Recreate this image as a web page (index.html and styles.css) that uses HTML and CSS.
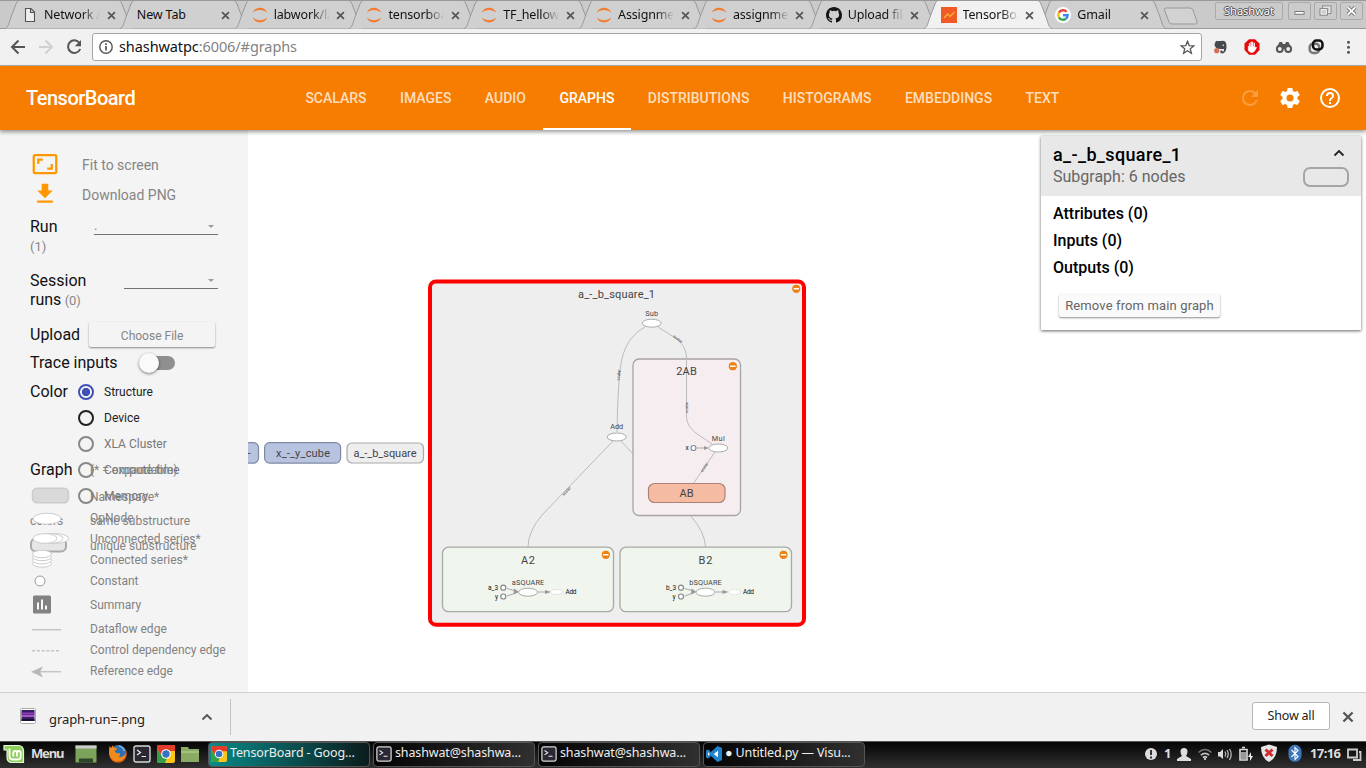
FILE: index.html
```html
<!DOCTYPE html>
<html lang="en">
<head>
<meta charset="utf-8">
<title>TensorBoard</title>
<link rel="stylesheet" href="styles.css">
</head>
<body>
<svg class="defs" width="0" height="0">
  <defs>
    <symbol id="tab" viewBox="0 0 128 29"><path d="M0 28.5C3 28 4 23 6 17L11 4C12 1.500 13 .5 15 .5H113C115 .5 116 1.500 117 4L122 17C124 23 125 28 128 28.500" /></symbol>
    <symbol id="x" viewBox="0 0 10 10"><path d="M1.200 1.200 8.800 8.800M8.800 1.200 1.200 8.800" fill="none" stroke="#555" stroke-width="1.900"/></symbol>
    <symbol id="jup" viewBox="0 0 16 16"><path d="M.8 5.500C3-1 13-1 15.200 5.500 11 2 5 2 .8 5.500ZM.8 10.500C3 17 13 17 15.200 10.500 11 14 5 14 .8 10.500Z" fill="#f37c2e"/></symbol>
    <symbol id="term" viewBox="0 0 18 18"><rect x="1" y="1" width="16" height="16" rx="2" fill="#2b2833" stroke="#d8d8d8" stroke-width="1.400"/><path d="M4 5 7.500 7.500 4 10M8.500 11.500H13" fill="none" stroke="#eee" stroke-width="1.200"/></symbol>
    <symbol id="chrome" viewBox="0 0 18 18"><rect width="18" height="18" rx="2" fill="#fbc51b"/><path d="M0 2Q0 0 2 0H16Q18 0 18 2V6H9L5 11 0 4Z" fill="#e53b2c"/><path d="M0 4 5 11 10 13 8 18H2Q0 18 0 16Z" fill="#34a14a"/><circle cx="9" cy="9" r="4.800" fill="#fff"/><circle cx="9" cy="9" r="3.700" fill="#3373c4"/></symbol>
    <symbol id="minus" viewBox="0 0 8 8"><circle cx="4" cy="4" r="3.900" fill="#ee8113"/><path d="M1.500 4H6.500" stroke="#fff" stroke-width="1.300"/></symbol>
  </defs>
</svg>

<div class="tabstrip">
  <div class="tab"><svg class="shape"><use href="#tab"/></svg><svg class="fav" viewBox="0 0 16 16"><path d="M3.500 1.500H9L12.500 5V14.500H3.500ZM8.500 1.500V5.500H12.500" fill="#eee" stroke="#555" stroke-width="1.100"/></svg><span class="tt">Network Analysis</span><svg class="tx"><use href="#x"/></svg></div>
  <div class="tab"><svg class="shape"><use href="#tab"/></svg><span class="tt wide">New Tab</span><svg class="tx"><use href="#x"/></svg></div>
  <div class="tab"><svg class="shape"><use href="#tab"/></svg><svg class="fav"><use href="#jup"/></svg><span class="tt">labwork/lab</span><svg class="tx"><use href="#x"/></svg></div>
  <div class="tab"><svg class="shape"><use href="#tab"/></svg><svg class="fav"><use href="#jup"/></svg><span class="tt">tensorboard</span><svg class="tx"><use href="#x"/></svg></div>
  <div class="tab"><svg class="shape"><use href="#tab"/></svg><svg class="fav"><use href="#jup"/></svg><span class="tt">TF_helloworld</span><svg class="tx"><use href="#x"/></svg></div>
  <div class="tab"><svg class="shape"><use href="#tab"/></svg><svg class="fav"><use href="#jup"/></svg><span class="tt">Assignment</span><svg class="tx"><use href="#x"/></svg></div>
  <div class="tab"><svg class="shape"><use href="#tab"/></svg><svg class="fav"><use href="#jup"/></svg><span class="tt">assignment</span><svg class="tx"><use href="#x"/></svg></div>
  <div class="tab"><svg class="shape"><use href="#tab"/></svg><svg class="fav" viewBox="0 0 16 16"><path fill="#151515" d="M8 0C3.580 0 0 3.580 0 8c0 3.540 2.290 6.530 5.470 7.590.4.070.55-.17.55-.38 0-.19-.01-.82-.01-1.490-2.010.37-2.530-.49-2.690-.94-.09-.23-.48-.94-.82-1.130-.28-.15-.68-.52-.01-.53.63-.01 1.080.58 1.230.82.72 1.210 1.870.87 2.330.66.070-.52.28-.87.51-1.070-1.780-.2-3.640-.89-3.640-3.950 0-.87.31-1.590.82-2.150-.08-.2-.36-1.020.08-2.120 0 0 .67-.21 2.200.82a7.600 7.600 0 0 1 4 0c1.530-1.040 2.200-.82 2.200-.82.44 1.100.16 1.920.08 2.120.51.56.82 1.270.82 2.150 0 3.070-1.870 3.750-3.650 3.950.29.25.54.73.54 1.480 0 1.070-.01 1.930-.01 2.200 0 .21.15.46.55.38A8 8 0 0 0 16 8c0-4.420-3.580-8-8-8"/></svg><span class="tt">Upload files</span><svg class="tx"><use href="#x"/></svg></div>
  <div class="tab active"><svg class="shape"><use href="#tab"/></svg><svg class="fav" viewBox="0 0 16 16"><rect width="16" height="16" fill="#f15a24"/><path d="M3 11 6.500 7 9 9.500 13.500 5" fill="none" stroke="#fbb03b" stroke-width="1.300"/></svg><span class="tt">TensorBoard</span><svg class="tx"><use href="#x"/></svg></div>
  <div class="tab"><svg class="shape"><use href="#tab"/></svg><svg class="fav" viewBox="0 0 16 16"><circle cx="8" cy="8" r="8" fill="#fff"/><g fill="none" stroke-width="2.400"><path d="M11.600 4.800A4.800 4.800 0 0 0 3.900 5.700" stroke="#ea4335"/><path d="M3.900 5.600A4.800 4.800 0 0 0 3.900 10.400" stroke="#fbbc05"/><path d="M3.900 10.300A4.800 4.800 0 0 0 11 11.700" stroke="#34a853"/><path d="M8 8.200H12.700A4.800 4.800 0 0 1 11 11.700" stroke="#4285f4"/></g></svg><span class="tt">Gmail</span><svg class="tx"><use href="#x"/></svg></div>
  <svg class="newtab" viewBox="0 0 36 18"><path d="M3 1H27Q29 1 30 3L34 15Q34.500 17 32.500 17H9Q7 17 6 15L1.500 3Q1 1 3 1Z" fill="#d2d2d2" stroke="#999"/></svg>
  <div class="winctl">
    <span class="user">Shashwat</span>
    <svg viewBox="0 0 23 17"><path d="M6 10.500H17" stroke="#777" stroke-width="4"/><path d="M7 10.500H16" stroke="#fff" stroke-width="2"/></svg>
    <svg viewBox="0 0 23 17"><g fill="#ccc"><rect x="9.500" y="4" width="7" height="6" stroke="#777" stroke-width="3"/><rect x="9.500" y="4" width="7" height="6" stroke="#fff"/><rect x="6.500" y="7" width="6" height="5" stroke="#777" stroke-width="3"/><rect x="6.500" y="7" width="6" height="5" stroke="#fff"/></g></svg>
    <svg viewBox="0 0 23 17"><path d="M7.500 4.500 15.500 12.500M15.500 4.500 7.500 12.500" stroke="#777" stroke-width="4"/><path d="M7.500 4.500 15.500 12.500M15.500 4.500 7.500 12.500" stroke="#fff" stroke-width="2"/></svg>
  </div>
</div>

<div class="toolbar">
  <svg class="nav" width="92" height="36" viewBox="0 0 92 36"><g fill="none" stroke-width="2"><path d="M25 18H12.500M18.500 11.500 12 18 18.500 24.500" stroke="#555"/><path d="M39 18H51.500M45.500 11.500 52 18 45.500 24.500" stroke="#d0d0d0"/><path d="M79.500 14A6.300 6.300 0 1 0 80.200 20" stroke="#555"/></g><path d="M81 11V17.200H74.800Z" fill="#555"/></svg>
  <div class="omni">
    <svg width="14" height="14" viewBox="0 0 14 14"><circle cx="7" cy="7" r="6.200" fill="none" stroke="#555" stroke-width="1.400"/><path d="M7 6V10.500M7 3.300V5" stroke="#555" stroke-width="1.700"/></svg>
    <span class="url">shashwatpc<i>:6006/#graphs</i></span>
    <svg class="star" width="15" height="15" viewBox="0 0 15 15"><path d="M7.500 1.300 9.200 5.600 13.800 5.900 10.300 8.800 11.400 13.300 7.500 10.800 3.600 13.300 4.700 8.800 1.200 5.900 5.800 5.600Z" fill="none" stroke="#555" stroke-width="1.300"/></svg>
  </div>
  <svg class="exts" width="160" height="36" viewBox="1206 29 160 36">
    <path d="M1214.500 44 1217.500 41H1221Q1226.500 40 1226.500 46 1226.500 53 1222.500 53.500 1219.500 53.500 1220.500 50.500H1222.500V52Q1224.500 51.500 1224 49H1220.500Q1214.500 49 1214.500 44Z" fill="#454a4e"/><path d="M1214.500 43H1217V40.500Z" fill="#454a4e"/><circle cx="1223.300" cy="45.200" r=".8" fill="#eee"/><circle cx="1216.700" cy="50.700" r="2.600" fill="#d4705a"/>
    <path d="M1249 39.300H1255L1259.500 43.500V50L1255 54.700H1249L1244.500 50V43.500Z" fill="#e8090d"/><path d="M1248.300 46V50Q1249 52.500 1252 52.500 1254.500 52.500 1256.500 47.500L1255.700 47 1254.500 48V43H1254V46.500H1253V42H1252.300V46.500H1251.500V42H1250.800V46.500H1250V43.500H1249.300V47.500Z" fill="#fff" stroke="#fff" stroke-width=".6"/>
    <path d="M1276.500 48 1279.500 42H1282L1283 44H1285L1286 42H1288.500L1291.500 48V49H1276.500Z" fill="#555"/><g fill="#f1f1f1" stroke="#555" stroke-width="2"><circle cx="1279.800" cy="49" r="2.900"/><circle cx="1288.200" cy="49" r="2.900"/></g>
    <g fill="none" stroke-width="2.500"><rect x="1309.700" y="43.700" width="9.500" height="9.300" rx="3.500" stroke="#777"/><rect x="1313" y="40.500" width="9.500" height="9" rx="3.500" stroke="#111"/></g>
    <g fill="#555"><circle cx="1348.500" cy="42.300" r="1.500"/><circle cx="1348.500" cy="47.300" r="1.500"/><circle cx="1348.500" cy="52.300" r="1.500"/></g>
  </svg>
</div>

<header class="header">
  <div class="brand">TensorBoard</div>
  <nav class="menu"><span>SCALARS</span><span>IMAGES</span><span>AUDIO</span><span class="on">GRAPHS</span><span>DISTRIBUTIONS</span><span>HISTOGRAMS</span><span>EMBEDDINGS</span><span>TEXT</span></nav>
  <div class="actions">
    <svg viewBox="0 0 24 24" class="dim"><path d="M17.650 6.350A7.960 7.960 0 0 0 12 4a8 8 0 1 0 7.730 10h-2.080A6 6 0 1 1 12 6c1.660 0 3.140.69 4.220 1.780L13 11h7V4z"/></svg>
    <svg viewBox="0 0 24 24"><path d="M19.430 12.980c.04-.32.07-.64.07-.98s-.03-.66-.07-.98l2.110-1.650c.19-.15.24-.42.12-.64l-2-3.460c-.12-.22-.39-.3-.61-.22l-2.490 1c-.52-.4-1.080-.73-1.690-.98l-.38-2.650C14.460 2.180 14.250 2 14 2h-4c-.25 0-.46.18-.49.42l-.38 2.650c-.61.25-1.170.59-1.690.98l-2.490-1c-.23-.09-.49 0-.61.22l-2 3.460c-.13.22-.07.49.12.64l2.110 1.650c-.04.32-.07.65-.07.98s.03.66.07.98l-2.110 1.650c-.19.15-.24.42-.12.64l2 3.460c.12.22.39.3.61.22l2.490-1c.52.4 1.080.73 1.690.98l.38 2.650c.03.24.24.42.49.42h4c.25 0 .46-.18.49-.42l.38-2.650c.61-.25 1.170-.59 1.690-.98l2.490 1c.23.09.49 0 .61-.22l2-3.460c.12-.22.07-.49-.12-.64zM12 15.500a3.500 3.500 0 1 1 0-7 3.500 3.500 0 0 1 0 7z"/></svg>
    <svg viewBox="0 0 24 24"><path d="M11 18h2v-2h-2zM12 2a10 10 0 1 0 0 20 10 10 0 0 0 0-20zm0 18a8 8 0 1 1 0-16 8 8 0 0 1 0 16zm0-14a4 4 0 0 0-4 4h2a2 2 0 1 1 4 0c0 2-3 1.750-3 5h2c0-2.250 3-2.500 3-5a4 4 0 0 0-4-4z"/></svg>
  </div>
</header>

<main class="main">
  <aside class="side">
    <div class="act"><svg width="30" height="30" viewBox="0 0 24 24"><path d="M19 12h-2v3h-3v2h5zM7 9h3V7H5v5h2zm14-6H3c-1.100 0-2 .9-2 2v14c0 1.100.9 2 2 2h18c1.100 0 2-.9 2-2V5c0-1.100-.9-2-2-2zm0 16H3V5h18z" transform="translate(1.200 .4) scale(.9)"/></svg><span>Fit to screen</span></div>
    <div class="act"><svg width="30" height="30" viewBox="0 0 24 24"><path d="M19 9h-4V3H9v6H5l7 7zM5 18v2h14v-2z" transform="translate(1.300 .3) scale(.89)"/></svg><span>Download PNG</span></div>
    <div class="field run"><div class="lab">Run<small>(1)</small></div><div class="select">.</div></div>
    <div class="field session"><div class="lab">Session runs <small>(0)</small></div><div class="select short"></div></div>
    <div class="row"><span>Upload</span><button class="file">Choose File</button></div>
    <div class="row"><span>Trace inputs</span><div class="switch"><b></b></div></div>
    <div class="color"><span>Color</span>
      <div class="radios"><div class="sel"><b></b>Structure</div><div class="dark"><b></b>Device</div><div><b></b>XLA Cluster</div><div><b></b>Compute time</div><div><b></b>Memory</div></div>
    </div>
    <div class="legend under">
      <div><em>colors</em>same substructure</div>
      <div><svg viewBox="0 0 50 25"><rect x="1" y="5.500" width="35" height="13" rx="5" fill="#e6e6e6" stroke="#aaa" stroke-width="2"/></svg>unique substructure</div>
    </div>
    <div class="legend">
      <div class="first"><strong>Graph</strong>(* = expandable)</div>
      <div class="h22"><svg viewBox="0 0 50 22"><rect x="2.500" y="2.300" width="36" height="14.500" rx="4.500" fill="#d9d9d9" stroke="#ccc" stroke-width="1.500"/></svg>Namespace*</div>
      <div><svg viewBox="0 0 50 21"><ellipse cx="17" cy="10.700" rx="14" ry="5.500" fill="#fff" stroke="#ccc"/></svg>OpNode</div>
      <div><svg viewBox="0 0 50 21"><g fill="#fff" stroke="#ccc"><ellipse cx="26" cy="9.500" rx="12.500" ry="4.800"/><ellipse cx="20.500" cy="9.500" rx="12.500" ry="4.800"/><ellipse cx="15" cy="9.500" rx="12" ry="4.800"/></g></svg>Unconnected series*</div>
      <div><svg viewBox="0 0 50 21"><g fill="#fff" stroke="#ccc"><ellipse cx="12" cy="13.500" rx="9.500" ry="3.700"/><ellipse cx="12" cy="10.200" rx="9.500" ry="3.700"/><ellipse cx="12" cy="7" rx="9.500" ry="3.700"/><ellipse cx="12" cy="4" rx="9.500" ry="3.700"/></g></svg>Connected series*</div>
      <div><svg viewBox="0 0 50 21"><circle cx="10" cy="10" r="5" fill="#fff" stroke="#999"/></svg>Constant</div>
      <div class="h27"><svg viewBox="0 0 50 27"><rect x="3" y="3.500" width="18" height="18" rx="1.500" fill="#828282"/><path d="M8 10.500V17.500M12 7.500V17.500M16 13.500V17.500" stroke="#fff" stroke-width="1.900"/></svg>Summary</div>
      <div><svg viewBox="0 0 50 21"><path d="M2 10.700H31" stroke="#c4c4c4" stroke-width="1.500"/></svg>Dataflow edge</div>
      <div><svg viewBox="0 0 50 21"><path d="M2 10.700H30" stroke="#c4c4c4" stroke-width="1.500" stroke-dasharray="3 1.800"/></svg>Control dependency edge</div>
      <div><svg viewBox="0 0 50 21"><path d="M10 10.700H31" stroke="#c4c4c4" stroke-width="1.500"/><path d="M1 10.700 13 5.500 10 10.700 13 16.500Z" fill="#b8b8b8"/></svg>Reference edge</div>
    </div>
  </aside>

  <svg class="graph" viewBox="248 130 1118 562">
    <g stroke="#7f89a3" stroke-width="1.200"><rect x="200" y="442.600" width="58.500" height="20.500" rx="5" fill="#b8c3e0"/><rect x="264.600" y="442.600" width="76" height="20.500" rx="5" fill="#b8c3e0"/><rect x="347" y="443" width="76.500" height="20" rx="5" fill="#eee" stroke="#a9a9a9"/></g>
    <g class="t11"><text x="249" y="457" text-anchor="middle">-</text><text x="303" y="457" textLength="54">x_-_y_cube</text><text x="385" y="457" textLength="63">a_-_b_square</text></g>
    <rect x="430" y="281.500" width="374" height="343.200" rx="6" fill="#eee" stroke="#f00" stroke-width="4"/>
    <g class="edge">
      <path d="M645 327C622 340 620 362 618.500 390 617.500 405 617.300 420 617 432"/>
      <path d="M613 441 543 514Q528 531 528 547M621 441 690 515Q705 532 705.500 547"/>
    </g>
    <rect x="633" y="359" width="107.500" height="156.500" rx="6" fill="#f6edf1" stroke="#a9a3a6" stroke-width="1.300"/>
    <g fill="#f0f5ee" stroke="#a6aba4" stroke-width="1.300"><rect x="442.500" y="547.200" width="171" height="64.500" rx="6"/><rect x="620" y="547.200" width="171.500" height="64.500" rx="6"/></g>
    <g class="edge">
      <path d="M658 327 677 339Q686.500 347 686.500 358V415C686.500 429 696 433 712 444M715 452 693 484"/>
      <path d="M697 448H707M507 588.500 516 591M507 596 516 593M538 592H547M684.500 588.500 693.500 591M684.500 596 693.500 593M715.500 592H724.500" stroke="#aaa"/>
    </g>
    <path d="M704 446 709 448 704 450ZM514 588.500 519 592 513.500 594.500ZM545 590 551 592 545 594ZM691.500 588.500 696.500 592 691 594.500ZM722.500 590 728.500 592 722.500 594Z" fill="#999"/>
    <rect x="648.500" y="483.500" width="76.500" height="19" rx="6" fill="#f5bca3" stroke="#ab8273" stroke-width="1.200"/>
    <g fill="#fff" stroke="#aaa"><ellipse cx="651.700" cy="323.200" rx="9.500" ry="4"/><ellipse cx="616.700" cy="437" rx="9.500" ry="4"/><ellipse cx="718.300" cy="448" rx="9.500" ry="4"/><ellipse cx="528" cy="592.200" rx="9.500" ry="4"/><ellipse cx="705.500" cy="592.200" rx="9.500" ry="4"/><g stroke-width=".7" stroke="#bbb" stroke-dasharray="1 1"><ellipse cx="556.700" cy="592" rx="6" ry="2.500"/><ellipse cx="734.400" cy="592" rx="6" ry="2.500"/></g></g>
    <g fill="#fff" stroke="#888" stroke-width="1.200"><circle cx="693.500" cy="448" r="2.500"/><circle cx="503.300" cy="587.700" r="2.500"/><circle cx="503.300" cy="596.500" r="2.500"/><circle cx="681" cy="587.700" r="2.500"/><circle cx="681" cy="596.500" r="2.500"/></g>
    <g class="t11"><text x="616.500" y="298" textLength="77">a_-_b_square_1</text><text x="686.500" y="374.500" textLength="20.500">2AB</text><text x="686.500" y="496.500" textLength="14">AB</text><text x="528" y="564" textLength="14">A2</text><text x="705.500" y="564" textLength="14">B2</text></g>
    <g class="t7"><text x="651.700" y="316" textLength="13">Sub</text><text x="616.700" y="428.600" textLength="13">Add</text><text x="718.300" y="441" textLength="13">Mul</text><text x="528" y="584.700" textLength="32.500">aSQUARE</text><text x="705.500" y="584.700" textLength="32.500">bSQUARE</text></g>
    <g class="t6"><text x="687" y="450.300">x</text><text x="493" y="590">a_3</text><text x="496.500" y="598.700">y</text><text x="671" y="590">b_3</text><text x="674" y="598.700">y</text><text x="571" y="594.300" textLength="11">Add</text><text x="748.500" y="594.300" textLength="11">Add</text></g>
    <g class="t4"><text transform="translate(620 375) rotate(-86)">scalar</text><text transform="translate(677 340) rotate(38)">scalar</text><text transform="translate(688 407.500) rotate(-90)">scalar</text><text transform="translate(705.500 468) rotate(-55)">scalar</text><text transform="translate(567.500 492) rotate(-46)">scalar</text></g>
    <use href="#minus" x="792" y="284.500" width="8.600" height="8.600"/><use href="#minus" x="728.500" y="362" width="8.600" height="8.600"/><use href="#minus" x="601.500" y="550.400" width="8.600" height="8.600"/><use href="#minus" x="779.200" y="550.400" width="8.600" height="8.600"/>
  </svg>

  <section class="info">
    <div class="ihead"><div><h1>a_-_b_square_1</h1><p>Subgraph: 6 nodes</p></div>
      <div class="iright"><svg width="12" height="8" viewBox="0 0 12 8"><path d="M1.500 6.500 6 2 10.500 6.500" fill="none" stroke="#222" stroke-width="1.800"/></svg><b></b></div></div>
    <div class="ibody"><h2>Attributes (0)</h2><h2>Inputs (0)</h2><h2>Outputs (0)</h2><button>Remove from main graph</button></div>
  </section>
</main>

<div class="shelf">
  <svg class="thumb" width="16" height="16" viewBox="0 0 16 16"><rect x=".5" y=".5" width="15" height="15" rx="1" fill="#fff" stroke="#aaa"/><rect x="1.500" y="2" width="13" height="11" fill="#3a1c66"/><path d="M1.500 5.500H14.500" stroke="#8a3fb5" stroke-width="2"/><path d="M2 8H14" stroke="#b45fd0" stroke-width="1.800"/><path d="M1.500 12H14.500" stroke="#1d1038" stroke-width="2"/></svg>
  <span class="fname">graph-run=.png</span>
  <svg class="chev" width="12" height="8" viewBox="0 0 12 8"><path d="M1.500 6.500 6 2 10.500 6.500" fill="none" stroke="#555" stroke-width="1.900"/></svg>
  <div class="sep"></div>
  <button class="showall">Show all</button>
  <svg class="sx" width="12" height="12"><use href="#x"/></svg>
</div>

<div class="taskbar">
  <svg class="quick" width="208" height="27" viewBox="0 741 208 27">
    <path d="M4 745.500H18Q23.500 745.500 23.500 751V762.500H12Q7 762.500 7 757V750H4Z" fill="#8fcf5c" stroke="#e8f5df" stroke-width="1.200"/><path d="M9.500 748.500V756Q9.500 759.500 12.500 759.500H18Q20.700 759.500 20.700 756.500V753Q20.700 751 18.800 751 17 751 17 753V756.500M17 753Q17 751 15.200 751 13.300 751 13.300 753V756.500" fill="none" stroke="#fff" stroke-width="1.800"/>
    <text x="31" y="758.300" textLength="33.500" class="mtext">Menu</text>
    <rect x="75.500" y="745.500" width="21" height="17" fill="#7da35a"/><rect x="75.500" y="745.500" width="21" height="3" fill="#ccc"/><rect x="79" y="758.500" width="14" height="4" fill="#30442c"/>
    <circle cx="118" cy="754" r="8.800" fill="#d9560f"/><circle cx="118.500" cy="752" r="7" fill="#2c6fb5"/><path d="M109.500 746Q107 761 118 761.500 125 761 126 753 123 758 118.500 757 121 755 119.500 753 116 754 114.500 751 117 750 117 748 113 748.500 112.500 745L111.500 748Z" fill="#f08a1c"/><path d="M119 746Q123 747 124.500 751" fill="none" stroke="#7fb6e3" stroke-width="1.500"/>
    <use href="#term" x="133" y="745" width="18" height="18"/><use href="#chrome" x="157" y="745" width="18" height="18"/>
    <path d="M181 747H188L189 749H199V762H181Z" fill="#8aab63"/><path d="M181 752H199" stroke="#bdd79e"/>
  </svg>
  <div class="task cur"><svg><use href="#chrome"/></svg><span>TensorBoard - Goog...</span></div>
  <div class="task"><svg><use href="#term"/></svg><span>shashwat@shashwa...</span></div>
  <div class="task"><svg><use href="#term"/></svg><span>shashwat@shashwa...</span></div>
  <div class="task"><svg viewBox="0 0 16 16"><path d="M11.500 0 16 2V14L11.500 16 5 10 2 12.500 0 11.500V4.500L2 3.500 5 6ZM12 4.500 7.500 8 12 11.500ZM2 6V10L4 8Z" fill="#1f84cf" fill-rule="evenodd"/><path d="M12 4.500 7.500 8 12 11.500ZM2 6V10L4 8Z" fill="#fff"/></svg><span>● Untitled.py — Visu...</span></div>
  <svg class="tray" width="230" height="27" viewBox="1136 741 230 27">
    <circle cx="1151" cy="754" r="6" fill="#ddd"/><path d="M1151 750V755M1151 756.500V758.500" stroke="#222" stroke-width="1.800"/>
    <text x="1164" y="758" textLength="6.500" class="mtext">1</text>
    <path d="M1184 748Q1187.500 748 1187.500 751.500 1187.500 754 1186 756L1191 759V761H1177V759L1182 756Q1180.500 754 1180.500 751.500 1180.500 748 1184 748Z" fill="#ddd"/>
    <g fill="none" stroke-width="1.600"><path d="M1198.500 752.500Q1205 746.500 1211.500 752.500" stroke="#777"/><path d="M1200.800 755.200Q1205 751.500 1209.200 755.200" stroke="#bbb"/><path d="M1203 757.500Q1205 756 1207 757.500" stroke="#ddd"/></g><circle cx="1205" cy="759" r="1" fill="#eee"/>
    <path d="M1218 752H1220L1223 749V759L1220 756.500H1218Z" fill="#ddd"/><g fill="none" stroke="#bbb" stroke-width="1.300"><path d="M1225 751.500Q1226.500 754 1225 756.500M1227 750Q1229.500 754 1227 758M1229.500 749Q1233 754 1229.500 760"/></g>
    <path d="M1240 749.500H1247V760H1240ZM1242 747.500H1245" fill="none" stroke="#ddd" stroke-width="1.600"/><path d="M1241 752H1246V759H1241Z" fill="#999"/><path d="M1251 752 1248 757H1250V761L1253 756H1251Z" fill="#eee"/>
    <path d="M1261 747 1269 744.500 1277 747Q1277 758 1269 762 1261 758 1261 747Z" fill="#e6e6e6"/><path d="M1265.500 749.500 1272.500 756M1272.500 749.500 1265.500 756" stroke="#d12a2f" stroke-width="3"/>
    <rect x="1288.500" y="744.800" width="13" height="17" rx="6.300" fill="#3c76bb"/><path d="M1291.500 750 1298 756.500 1295 759.500V747.500L1298 750.500 1291.500 757" fill="none" stroke="#fff" stroke-width="1.100"/>
    <text x="1310" y="758" textLength="31" class="mtext">17:16</text>
    <path d="M1348 749.500H1357V757.500H1348ZM1359 752H1360.500V760H1353" fill="none" stroke="#ccc" stroke-width="1.800"/>
  </svg>
</div>
</body>
</html>
```

FILE: styles.css
```css
* { box-sizing: border-box; }
body { margin: 0; width: 1366px; height: 768px; overflow: hidden; display: flex; flex-direction: column; font-family: Roboto, sans-serif; background: #fff; }
.defs { position: absolute; }
svg { flex: none; }
button { font-family: inherit; margin: 0; padding: 0; }

/* Browser tabs */
.tabstrip { height: 29px; flex: none; display: flex; background: #cacaca; border-top: 1px solid #999; border-bottom: 1px solid #999; padding-left: 5px; font: 13px "Noto Sans", sans-serif; color: #111; }
.tab { position: relative; width: 128px; margin-right: -13.200px; height: 28px; margin-top: -1px; display: flex; align-items: center; padding-left: 17px; flex: none; }
.tab .shape { position: absolute; left: 0; top: 0; width: 128px; height: 29px; fill: #d0d0d0; stroke: #999; }
.tab .fav { position: relative; width: 16px; height: 16px; margin-right: 6px; margin-top: 2px; }
.tab .tt { position: relative; width: 56px; overflow: hidden; white-space: nowrap; font-size: 12.500px; letter-spacing: -.15px; line-height: 20px; margin-top: 1px; -webkit-mask-image: linear-gradient(90deg, #000 68%, transparent 100%); mask-image: linear-gradient(90deg, #000 68%, transparent 100%); }
.tab .tt.wide { width: 78px; -webkit-mask-image: none; mask-image: none; }
.tab .tx { position: relative; width: 9px; height: 9px; margin-left: 6.500px; margin-top: 2px; }
.tab.active { z-index: 2; }
.tab.active .shape { fill: #f1f1f1; }
.newtab { width: 36px; height: 18px; margin: 6px 0 0 10px; }
.winctl { display: flex; margin: 1px 3px 0 auto; height: 18px; gap: 3px; }
.winctl .user { width: 68px; margin-right: 2px; line-height: 16px; font-size: 11px; text-align: center; color: #fff; text-shadow: 1px 0 #555, -1px 0 #555, 0 1px #555, 0 -1px #555; }
.winctl > * { border: 1px solid #aaa; border-radius: 2px; background: #cbcbcb; height: 18px; }
.winctl svg { width: 23px; }

.toolbar { height: 37px; flex: none; display: flex; align-items: center; background: #f1f1f1; border-bottom: 1px solid #b0b0b0; }
.omni { width: 1110px; height: 28px; background: #fff; border: 1px solid #a5a5a5; border-radius: 3px; display: flex; align-items: center; padding: 0 6px; }
.url { font: 14.500px "Noto Sans", sans-serif; letter-spacing: -.09px; margin: -2px 0 0 6px; color: #111; }
.url i { font-style: normal; color: #828282; }
.star { margin-left: auto; }
.exts { margin-left: 4px; }

/* App header */
.header { height: 64px; flex: none; background: #f77d00; display: flex; align-items: center; color: #fff; box-shadow: 0 2px 4px rgba(0,0,0,.4); z-index: 2; padding: 0 24px 0 26px; }
.brand { font-size: 20px; font-weight: 500; letter-spacing: -.5px; width: 262.700px; }
.menu { display: flex; height: 64px; font-size: 14px; font-weight: 500; letter-spacing: .01px; }
.menu span { padding: 0 16.700px; line-height: 64px; color: rgba(255,255,255,.76); }
.menu .on { color: #fff; border-bottom: 2px solid #fff; }
.actions { display: flex; gap: 16px; margin-left: auto; }
.actions svg { width: 24px; height: 24px; fill: #fff; }
.actions .dim { opacity: .25; }

.main { flex: 1; min-height: 0; display: flex; position: relative; }
.side { width: 248px; background: #f4f4f4; padding: 20px 0 0 30px; position: relative; font-size: 16px; color: #111; }
.act { height: 30px; display: flex; align-items: center; gap: 22px; font-size: 14px; color: #858585; }
.act svg { fill: #ff9800; }
.field { display: flex; justify-content: space-between; padding-right: 30px; }
.field small { font-size: 13px; color: #888; }
.run { padding-top: 7px; height: 61px; }
.run small { display: block; }
.lab { line-height: 20px; }
.session { height: 49px; }
.session .lab { width: 75px; line-height: 19px; }
.session small { letter-spacing: -.2px; margin-left: -.5px; }
.select { width: 124px; height: 18px; border-bottom: 1px solid #737373; font-size: 13px; line-height: 18px; color: #888; position: relative; }
.select::after { content: ""; position: absolute; right: 4px; top: 8px; border: 3.500px solid transparent; border-top-color: #999; border-bottom: 0; }
.select.short { width: 94px; }
.row { height: 28px; display: flex; align-items: center; }
.file { width: 126px; height: 25px; margin-left: 9px; border: 0; border-radius: 2px; background: #f4f4f4; color: #858585; font-size: 12px; padding-top: 3px; box-shadow: 0 1px 2px rgba(0,0,0,.45); }
.switch { width: 33px; height: 14px; border-radius: 7px; background: #8f8f8f; margin: 1px 0 0 24px; }
.switch b { display: block; width: 20px; height: 20px; border-radius: 50%; background: #fafafa; margin: -3px 0 0 -3px; box-shadow: 0 1px 3px rgba(0,0,0,.5); }
.color { display: flex; line-height: 26px; padding-top: 3px; }
.color > span { width: 48px; }
.radios div { height: 26px; display: flex; align-items: center; gap: 10px; font-size: 12px; color: #777; }
.radios b { width: 16px; height: 16px; border-radius: 50%; border: 2px solid #888; }
.radios .sel, .radios .dark { color: #222; }
.radios .dark b { border-color: #222; }
.radios .sel b { border-color: #3f51b5; background: radial-gradient(#3f51b5 0 3.800px, transparent 4.500px); }
/* The two legends share the lower part of the column */
.legend { position: absolute; left: 30px; top: 323.500px; width: 215px; font-size: 12px; color: #828282; }
.legend.under { top: 378px; }
.legend > div { height: 21px; display: flex; align-items: center; white-space: nowrap; }
.legend.under > div { height: 25px; }
.legend .first { height: 32px; }
.legend .h22 { height: 22px; }
.legend .h27 { height: 27px; }
.legend svg { width: 50px; height: 100%; margin-right: 10px; }
.legend strong { width: 60px; font-size: 16px; font-weight: 400; color: #111; }
.legend em { width: 60px; font-style: normal; }

.graph { width: 1118px; height: 562px; }
.graph text { font-family: Roboto, sans-serif; text-anchor: middle; fill: #444; }
.t11 { font-size: 11px; }
.t7 { font-size: 7.300px; }
.t6 { font-size: 6.500px; }
.t6 text { fill: #111 !important; }
.t4 { font-size: 4px; }
.edge { fill: none; stroke: #bbb; stroke-width: 1; }

.info { position: absolute; left: 1041px; top: 6px; width: 320px; height: 194px; background: #fff; box-shadow: 0 1px 3px rgba(0,0,0,.6); }
.ihead { height: 60px; background: #e8e8e8; display: flex; justify-content: space-between; padding: 8px 12px; }
.info h1 { margin: 0; font-size: 18px; font-weight: 500; letter-spacing: .36px; line-height: 22px; color: #000; }
.info p { margin: 0; font-size: 16px; line-height: 21px; color: #666; }
.iright { display: flex; flex-direction: column; align-items: flex-end; gap: 10px; padding-top: 5px; }
.iright svg { margin-right: 4px; }
.iright b { width: 46px; height: 20px; border: 2px solid #a5a5a5; border-radius: 7px; }
.ibody { padding: 4px 12px; }
.info h2 { margin: 0; font-size: 16px; font-weight: 500; line-height: 27px; color: #000; }
.ibody button { display: block; margin: 13px 0 0 6px; width: 161px; height: 23px; border: 0; border-radius: 2px; background: #fafafa; font-size: 13px; letter-spacing: .13px; color: #666; box-shadow: 0 1px 2px rgba(0,0,0,.45); }

.shelf { height: 49px; flex: none; background: #f1f1f1; border-top: 1px solid #d0d0d0; display: flex; align-items: center; padding: 0 12px 0 20px; font: 13px "Noto Sans", sans-serif; color: #222; z-index: 3; }
.fname { margin-left: 13px; width: 152px; padding-top: 4px; letter-spacing: -.07px; }
.sep { width: 1px; height: 36px; background: #c4c4c4; margin: 0 auto 0 17px; }
.showall { width: 78px; height: 28px; border: 1px solid #b5b5b5; border-radius: 3px; background: #fff; font-size: 12.500px; letter-spacing: -.2px; color: #222; margin: -2px 12px 0 0; padding-bottom: 1px; }
.sx { margin-top: -1px; }
.thumb { margin-top: -2px; }

.taskbar { height: 27px; flex: none; display: flex; background: linear-gradient(#050505, #303030); border-top: 1px solid #555; font-family: "Noto Sans", sans-serif; z-index: 3; }
.quick, .tray { margin-top: -1px; }
.mtext { font: bold 13px "Noto Sans", sans-serif; fill: #ddd; }
.task { width: 162px; height: 25px; margin-right: 3px; border: 1px solid #555; border-radius: 4px; background: linear-gradient(100deg, #030303, #303030); display: flex; align-items: center; padding: 0 2px 2px; gap: 3px; color: #eee; font-size: 12.500px; letter-spacing: -.13px; white-space: nowrap; }
.task span { margin-top: -3px; }
.task svg { width: 16px; height: 16px; }
.task.cur { background: linear-gradient(90deg, #078a89, #0c1c1c); }
.tray { margin-left: auto; }
```
